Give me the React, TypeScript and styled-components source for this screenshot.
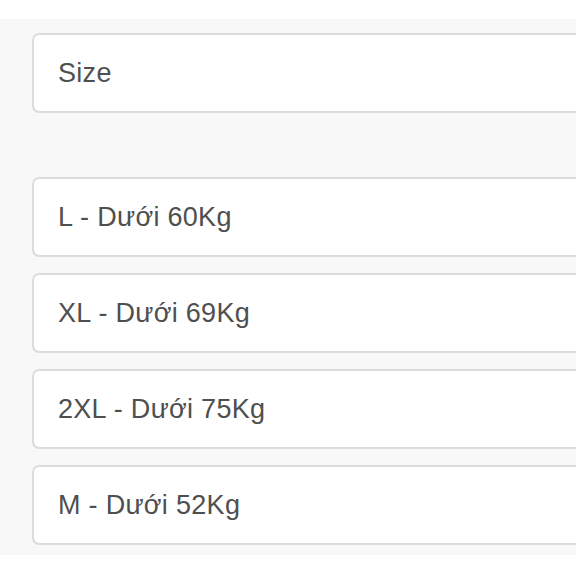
import React from "react";
import styled, { createGlobalStyle } from "styled-components";

const Global = createGlobalStyle`
  html, body { margin: 0; padding: 0; background: #ffffff; overflow: hidden; }
  body { font-family: "Liberation Sans", Arial, sans-serif; }
`;

const Page = styled.div`
  width: 576px;
  height: 576px;
  overflow: hidden;
  padding-top: 19px;
  box-sizing: border-box;
`;

const Panel = styled.section`
  background: #f8f8f8;
  padding: 14px 0 10px 32px;
  display: flex;
  flex-direction: column;
`;

const Options = styled.div`
  display: flex;
  flex-direction: column;
  gap: 16px;
  margin-top: 64px;
`;

const Field = styled.div`
  width: 640px;
  height: 80px;
  box-sizing: border-box;
  border: 2px solid #dcdcdc;
  border-radius: 7px;
  background: #ffffff;
  display: flex;
  align-items: center;
  padding: 1px 0 0 24px;
  font-size: 27px;
  letter-spacing: 0.3px;
  color: #4f4f4f;
`;

const options = ["L - Dưới 60Kg", "XL - Dưới 69Kg", "2XL - Dưới 75Kg", "M - Dưới 52Kg"];

export default function App() {
  return (
    <Page>
      <Global />
      <Panel>
        <Field>Size</Field>
        <Options>
          {options.map((o) => (
            <Field key={o}>{o}</Field>
          ))}
        </Options>
      </Panel>
    </Page>
  );
}
